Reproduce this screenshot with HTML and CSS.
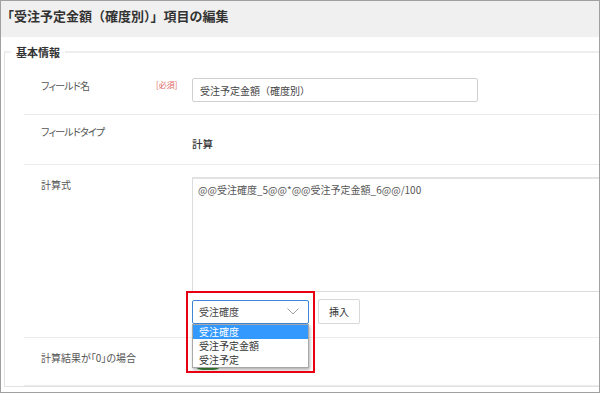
FILE: index.html
```html
<!DOCTYPE html>
<html lang="ja">
<head>
  <meta charset="UTF-8">
  <title>項目の編集</title>
  <link rel="stylesheet" href="styles.css">
</head>
<body>
  <div class="frame">
    <div class="header">
      <h1 class="title">「受注予定金額（確度別）」項目の編集</h1>
    </div>

    <fieldset class="section">
      <legend>基本情報</legend>

      <div class="row row-name">
        <div class="label kana">フィールド名</div>
        <div class="req">[必須]</div>
        <div class="value">
          <input class="text-input" type="text" value="受注予定金額（確度別）">
        </div>
      </div>

      <div class="row row-type">
        <div class="label kana">フィールドタイプ</div>
        <div class="req"></div>
        <div class="value type-value">計算</div>
      </div>

      <div class="row row-formula">
        <div class="label">計算式</div>
        <div class="req"></div>
        <div class="value">
          <div class="formula">@@受注確度_5@@*@@受注予定金額_6@@/100</div>
          <div class="insert-row">
            <div class="select">
              <span>受注確度</span>
              <svg class="chevron" width="12" height="7" viewBox="0 0 12 7">
                <polyline points="0.5,0.5 6,6 11.5,0.5" fill="none" stroke="#a0a0a0" stroke-width="1"/>
              </svg>
              <ul class="dropdown">
                <li class="selected">受注確度</li>
                <li>受注予定金額</li>
                <li>受注予定</li>
              </ul>
            </div>
            <button class="insert-btn">挿入</button>
            <div class="highlight"></div>
          </div>
        </div>
      </div>

      <div class="row row-zero">
        <div class="label">計算結果が「0」の場合</div>
        <div class="req"></div>
        <div class="value">
          <div class="toggle"></div>
        </div>
      </div>
    </fieldset>
  </div>
</body>
</html>
```

FILE: styles.css
```css
body {
  margin: 0;
  font-family: "Noto Sans CJK JP", "Noto Sans", sans-serif;
  color: #333;
  background: #fff;
}

.frame {
  position: relative;
  width: 600px;
  height: 393px;
  box-sizing: border-box;
  border: 1px solid #a0a0a0;
  overflow: hidden;
}

.header {
  height: 36px;
  background-color: #f0f0f0;
}

.title {
  margin: 0;
  padding-left: 0;
  font-size: 13px;
  font-weight: bold;
  line-height: 30px;
  color: #333;
}

.section {
  width: 700px;
  margin: 7px 0 0 3px;
  padding: 6px 0 0 0;
  border: 1px solid #e2e2e2;
  border-top: 2px solid #eeeeee;
}

.section legend {
  margin-left: 6px;
  padding: 0 5px;
  font-size: 11px;
  font-weight: bold;
  line-height: 16px;
  color: #333;
}

.row {
  display: grid;
  grid-template-columns: 132px 36px 1fr;
  align-items: start;
  margin-left: 19px;
  padding: 12px 0;
  border-bottom: 1px solid #ebebeb;
}

.label {
  padding-left: 17px;
  font-size: 10px;
  line-height: 16px;
  font-feature-settings: "palt";
  color: #555;
  white-space: nowrap;
}

.label.kana {
  letter-spacing: -0.8px;
}

.req {
  font-size: 8px;
  line-height: 14px;
  color: #e06666;
  white-space: nowrap;
}

.text-input {
  display: block;
  width: 286px;
  height: 24px;
  box-sizing: border-box;
  padding: 0 7px;
  border: 1px solid #d0d0d0;
  border-radius: 2px;
  font-family: "Noto Sans CJK JP", "Noto Sans", sans-serif;
  font-size: 10px;
  color: #444;
  outline: none;
}

.row-type {
  padding: 9px 0 8px;
}

.type-value {
  margin-top: 12px;
  margin-bottom: 4px;
  font-size: 10.5px;
  line-height: 16px;
  font-weight: 500;
  color: #333;
}

.row-formula {
  padding-bottom: 13px;
}

.formula {
  width: 480px;
  height: 115px;
  box-sizing: border-box;
  padding: 3px 5px;
  border: 1px solid #dcdcdc;
  border-top: 2px solid #e2e2e2;
  font-size: 10px;
  line-height: 16px;
  color: #555;
}

.insert-row {
  position: relative;
  display: flex;
  align-items: center;
  gap: 9px;
  margin-top: 7px;
}

.select {
  position: relative;
  display: flex;
  align-items: center;
  justify-content: space-between;
  width: 117px;
  height: 24px;
  box-sizing: border-box;
  padding: 0 9px 0 6px;
  border: 1px solid #3d86d8;
  border-radius: 2px;
  font-size: 10px;
  color: #444;
}

.chevron {
  display: block;
}

.dropdown {
  position: absolute;
  top: 23px;
  left: -1px;
  width: 117px;
  box-sizing: border-box;
  margin: 0;
  padding: 0;
  list-style: none;
  background: #fff;
  border: 1px solid #a8a8a8;
  box-shadow: 1px 2px 3px rgba(0, 0, 0, 0.3);
  z-index: 2;
}

.dropdown li {
  padding: 0 6px;
  font-size: 10px;
  line-height: 14px;
  color: #333;
}

.dropdown li.selected {
  background-color: #3399ff;
  color: #fff;
}

.insert-btn {
  width: 42px;
  height: 25px;
  padding: 0;
  background: #fff;
  border: 1px solid #d8d8d8;
  border-radius: 2px;
  font-family: "Noto Sans CJK JP", "Noto Sans", sans-serif;
  font-size: 10px;
  color: #333;
}

.highlight {
  position: absolute;
  left: -6px;
  top: -8px;
  width: 129px;
  height: 82px;
  box-sizing: border-box;
  border: 2px solid #e60012;
  z-index: 3;
}

.row-zero {
  padding: 12px 0 15px;
}

.toggle {
  width: 30px;
  height: 18px;
  margin-top: 2px;
  margin-left: 1px;
  border-radius: 9px;
  background-color: #3e8e3e;
}
```
